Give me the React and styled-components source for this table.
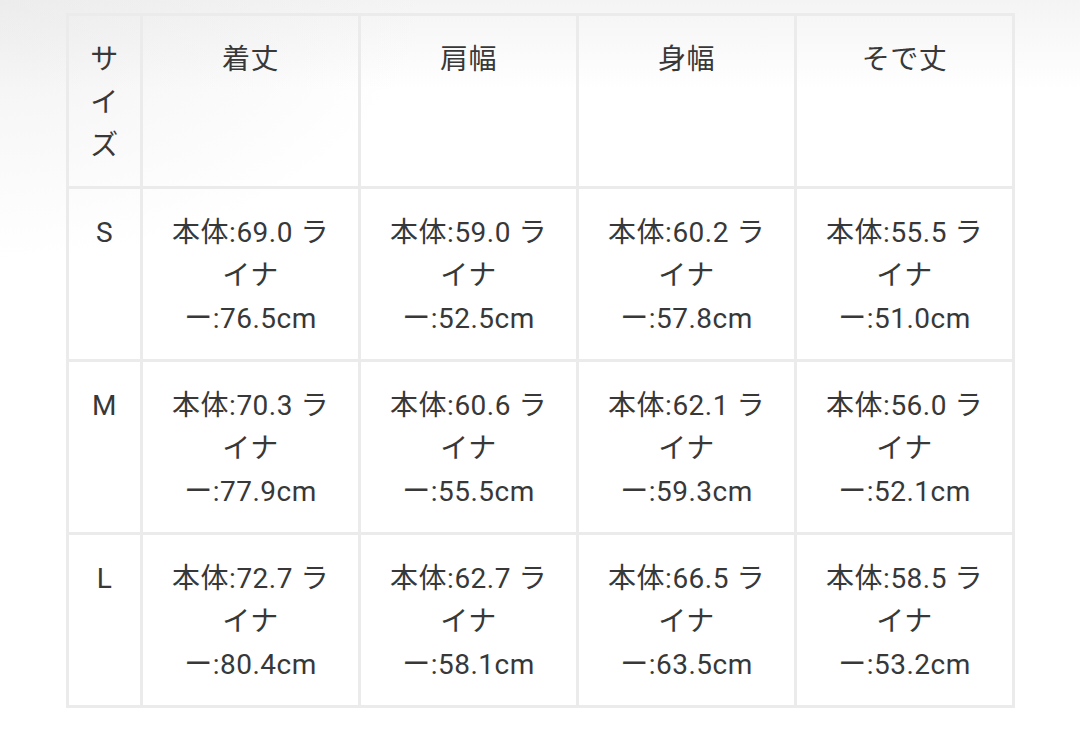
import React from "react";
import styled, { createGlobalStyle } from "styled-components";

const Global = createGlobalStyle`
  html, body { margin: 0; padding: 0; }
  body {
    background:
      radial-gradient(ellipse 420px 260px at 0 0, rgba(230,230,230,0.55), rgba(255,255,255,0) 100%),
      linear-gradient(to bottom, #f4f4f4 0px, #ffffff 90px);
    background-color: #fff;
    min-height: 729px;
    font-family: Roboto, "Noto Sans CJK JP", sans-serif;
    color: #333;
  }
`;

const Page = styled.div`
  padding: 13px 0 0 66px;
`;

const Table = styled.table`
  border-collapse: collapse;
  border: 3px solid #ebebeb;
  table-layout: fixed;
`;

const Cell = styled.td`
  border: 3px solid #ebebeb;
  padding: 22px 0 19px;
  width: ${(p) => (p.$narrow ? "71px" : "215px")};
  text-align: center;
  vertical-align: top;
  font-family: Roboto, "Noto Sans CJK JP", sans-serif;
  font-size: 28px;
  letter-spacing: 0.5px;
  line-height: 43px;
  white-space: nowrap;
  color: #383838;
`;

const HeadCell = styled(Cell).attrs({ as: "th" })`
  font-weight: 400;
`;

const Line = styled.span`
  display: block;
`;

const columns = ["着丈", "肩幅", "身幅", "そで丈"];

const rows = [
  { size: "S", values: [["69.0", "76.5"], ["59.0", "52.5"], ["60.2", "57.8"], ["55.5", "51.0"]] },
  { size: "M", values: [["70.3", "77.9"], ["60.6", "55.5"], ["62.1", "59.3"], ["56.0", "52.1"]] },
  { size: "L", values: [["72.7", "80.4"], ["62.7", "58.1"], ["66.5", "63.5"], ["58.5", "53.2"]] },
];

export default function App() {
  return (
    <>
      <Global />
      <Page>
        <Table>
          <thead>
            <tr>
              <HeadCell $narrow>
                <Line>サ</Line>
                <Line>イ</Line>
                <Line>ズ</Line>
              </HeadCell>
              {columns.map((c) => (
                <HeadCell key={c}>{c}</HeadCell>
              ))}
            </tr>
          </thead>
          <tbody>
            {rows.map((r) => (
              <tr key={r.size}>
                <Cell $narrow>{r.size}</Cell>
                {r.values.map(([a, b], i) => (
                  <Cell key={i}>
                    <Line>本体:{a} ラ</Line>
                    <Line>イナ</Line>
                    <Line>ー:{b}cm</Line>
                  </Cell>
                ))}
              </tr>
            ))}
          </tbody>
        </Table>
      </Page>
    </>
  );
}
